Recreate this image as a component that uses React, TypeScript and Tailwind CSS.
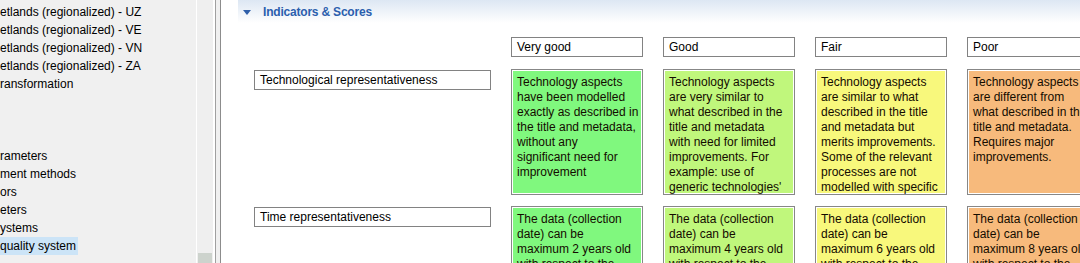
import React from 'react';

const treeRows = [
  "etlands (regionalized) - UZ",
  "etlands (regionalized) - VE",
  "etlands (regionalized) - VN",
  "etlands (regionalized) - ZA",
  "ransformation",
  "",
  "",
  "",
  "rameters",
  "ment methods",
  "ors",
  "eters",
  "ystems",
  "quality system",
];

const scores = ["Very good", "Good", "Fair", "Poor"];

const cellColors = ["bg-[#80f87e]", "bg-[#c0f77c]", "bg-[#f8f87c]", "bg-[#f7ba7c]"];

const indicators = [
  {
    name: "Technological representativeness",
    cells: [
      ["Technology aspects", "have been modelled", "exactly as described in", "the title and metadata,", "without any", "significant need for", "improvement"],
      ["Technology aspects", "are very similar to", "what described in the", "title and metadata", "with need for limited", "improvements. For", "example: use of", "generic technologies'"],
      ["Technology aspects", "are similar to what", "described in the title", "and metadata but", "merits improvements.", "Some of the relevant", "processes are not", "modelled with specific"],
      ["Technology aspects", "are different from", "what described in the", "title and metadata.", "Requires major", "improvements."],
    ],
  },
  {
    name: "Time representativeness",
    cells: [
      ["The data (collection", "date) can be", "maximum 2 years old", "with respect to the"],
      ["The data (collection", "date) can be", "maximum 4 years old", "with respect to the"],
      ["The data (collection", "date) can be", "maximum 6 years old", "with respect to the"],
      ["The data (collection", "date) can be", "maximum 8 years old", "with respect to the"],
    ],
  },
];

const App: React.FC = () => {
  return (
    <div className="flex h-[263px] w-[1080px] overflow-hidden bg-white text-[12px] text-black font-['Liberation_Sans',Arial,sans-serif]">
      {/* Navigation tree */}
      <div className="w-[196px] shrink-0 bg-[#f0f0f0] pt-[3px] overflow-hidden">
        {treeRows.map((row, i) => (
          <div key={i} className="h-[18px] leading-[18px] whitespace-nowrap">
            {row && (
              <span className={`inline-block pr-[2px] ${i === treeRows.length - 1 ? 'bg-[#cce4f7]' : ''}`}>{row}</span>
            )}
          </div>
        ))}
      </div>
      <div className="w-px shrink-0 bg-white" />
      {/* Scrollbar */}
      <div className="w-[16px] shrink-0 bg-[#efefef] flex flex-col justify-end">
        <div className="h-[10px] bg-[#cdd3cd] mx-[1px]" />
      </div>
      {/* Sash */}
      <div className="w-[2px] shrink-0 bg-white" />
      <div className="w-px shrink-0 bg-[#a0a0a0]" />
      <div className="w-[4px] shrink-0 bg-[#f0f0f0]" />
      <div className="w-px shrink-0 bg-[#8c8c8c]" />

      {/* Editor */}
      <div className="flex-1 min-w-0 overflow-hidden">
        <div className="ml-[17px] h-[23px] flex items-center gap-[12px] pl-[5px] bg-gradient-to-b from-[#dde7f3] via-[#eef3f9] to-white">
          <svg width="8" height="5" viewBox="0 0 8 5" className="shrink-0 mt-[1px]">
            <polygon points="0,0 8,0 4,5" fill="#2f5fa9" />
          </svg>
          <span className="font-bold text-[#2b5fae] text-[12px] tracking-[-0.2px]">Indicators &amp; Scores</span>
        </div>

        <div className="pl-[33px] pt-[14px]">
          {/* Score headers */}
          <div className="flex gap-[20px]">
            <div className="w-[237px] shrink-0" />
            {scores.map((s) => (
              <div key={s} className="w-[132px] h-[20px] shrink-0 border border-[#828282] px-[5px] leading-[19px] whitespace-nowrap">
                {s}
              </div>
            ))}
          </div>

          {indicators.map((ind, r) => (
            <div key={ind.name} className={`flex gap-[20px] ${r === 0 ? 'mt-[12px]' : 'mt-[11px]'}`}>
              <div className="w-[237px] h-[20px] shrink-0 border border-[#828282] px-[5px] leading-[19px] mt-[1px] whitespace-nowrap">
                {ind.name}
              </div>
              {ind.cells.map((lines, c) => (
                <div
                  key={c}
                  className={`w-[132px] h-[126px] shrink-0 border border-[#878787] shadow-[inset_0_0_0_1px_white] overflow-hidden px-[5px] pt-[5px] text-[#140c00] leading-[15px] whitespace-nowrap ${cellColors[c]}`}
                >
                  {lines.map((l, i) => (
                    <div key={i}>{l}</div>
                  ))}
                </div>
              ))}
            </div>
          ))}
        </div>
      </div>
    </div>
  );
};

export default App;
